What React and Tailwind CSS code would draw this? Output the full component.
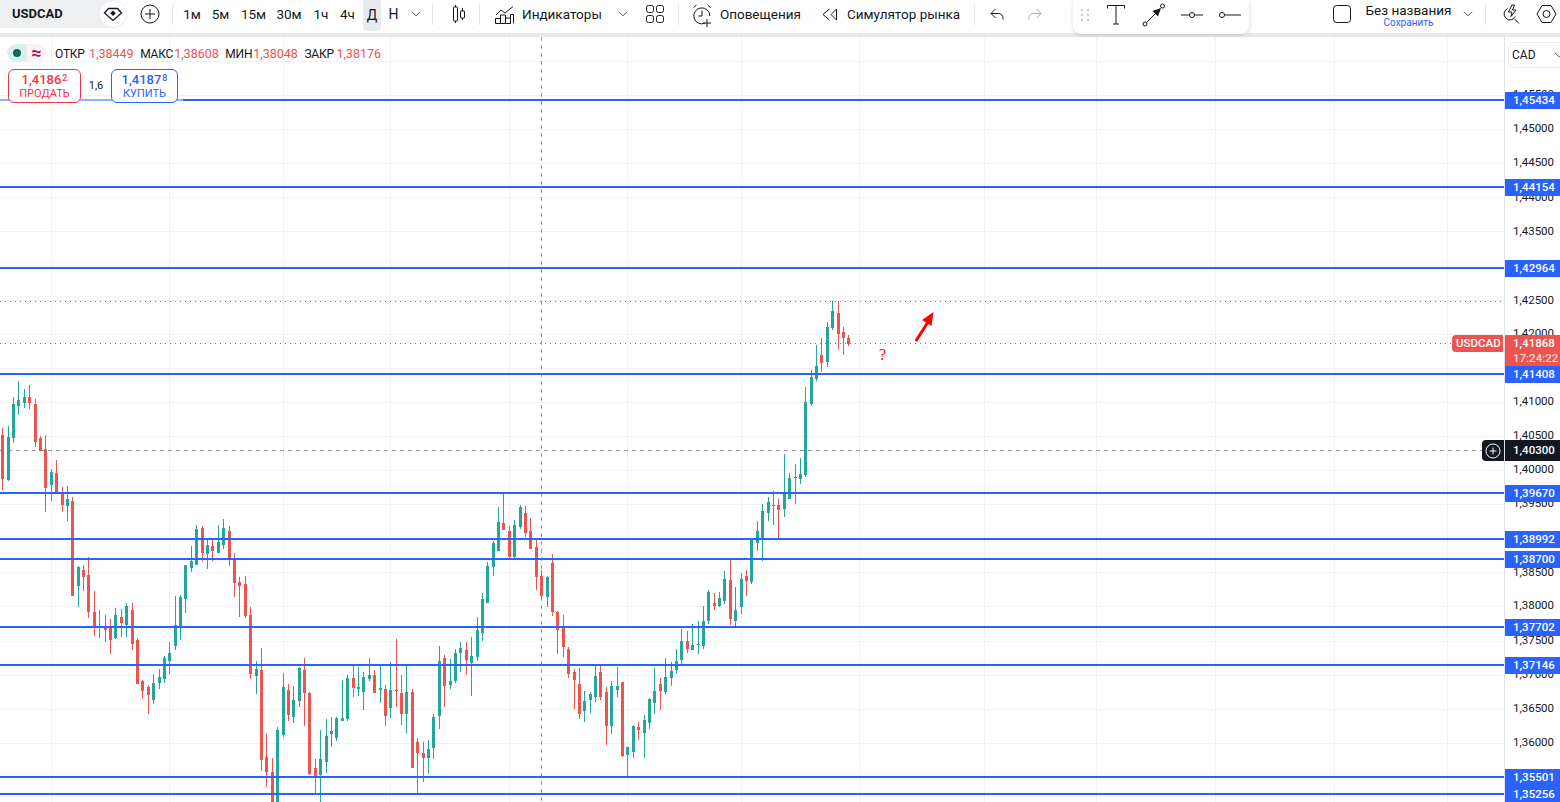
import React from 'react';

const FONT = "font-['Roboto',sans-serif]";

// x, wickTop, wickBottom, bodyTop, bodyBottom, color
const CANDLES = [
  [2, 428, 490, 435, 479, 'r'], [8, 426, 481, 437, 480, 'g'], [13, 397, 443, 404, 438, 'g'], [18, 381, 415, 400, 406, 'g'],
  [24, 389, 408, 397, 403, 'g'], [29, 385, 409, 397, 403, 'r'], [35, 399, 447, 404, 442, 'r'], [40, 436, 451, 438, 451, 'r'],
  [45, 435, 512, 449, 488, 'r'], [51, 469, 501, 472, 485, 'g'], [56, 460, 493, 473, 493, 'r'], [62, 487, 512, 492, 505, 'r'],
  [67, 486, 521, 499, 506, 'g'], [72, 497, 596, 501, 596, 'r'], [78, 566, 607, 567, 586, 'g'], [83, 565, 591, 570, 577, 'r'],
  [88, 557, 618, 575, 612, 'r'], [94, 591, 636, 612, 628, 'r'], [99, 610, 638, 626, 628, 'r'], [105, 615, 642, 627, 630, 'r'],
  [110, 619, 654, 626, 640, 'r'], [115, 608, 639, 615, 638, 'g'], [121, 609, 637, 617, 623, 'r'], [126, 603, 637, 606, 625, 'g'],
  [132, 603, 650, 610, 644, 'r'], [137, 638, 684, 640, 684, 'r'], [142, 680, 699, 681, 691, 'r'], [148, 685, 714, 687, 695, 'r'],
  [153, 674, 704, 683, 700, 'g'], [159, 669, 689, 677, 683, 'g'], [164, 656, 683, 658, 679, 'g'], [169, 642, 674, 653, 661, 'g'],
  [175, 596, 650, 625, 646, 'g'], [180, 595, 640, 597, 627, 'g'], [185, 565, 613, 565, 599, 'g'], [191, 546, 572, 561, 568, 'g'],
  [196, 525, 565, 529, 565, 'g'], [202, 526, 561, 528, 553, 'r'], [207, 539, 569, 545, 554, 'g'], [212, 540, 561, 546, 551, 'r'],
  [218, 525, 553, 542, 553, 'g'], [223, 519, 549, 528, 545, 'g'], [229, 526, 566, 531, 560, 'r'], [234, 553, 597, 559, 583, 'r'],
  [239, 577, 617, 582, 586, 'r'], [245, 576, 618, 584, 616, 'r'], [250, 607, 679, 615, 674, 'r'], [256, 661, 694, 669, 676, 'g'],
  [261, 648, 771, 670, 760, 'r'], [266, 733, 787, 757, 772, 'r'], [272, 758, 802, 772, 802, 'r'], [277, 727, 802, 730, 802, 'g'],
  [283, 673, 737, 687, 735, 'g'], [288, 684, 721, 690, 715, 'r'], [293, 686, 723, 700, 717, 'g'], [299, 667, 707, 668, 701, 'g'],
  [304, 658, 726, 670, 693, 'r'], [309, 692, 775, 693, 774, 'r'], [315, 759, 795, 768, 776, 'r'], [320, 730, 802, 759, 775, 'g'],
  [326, 719, 773, 736, 762, 'g'], [331, 717, 747, 731, 734, 'g'], [336, 717, 741, 718, 738, 'g'], [342, 680, 721, 718, 721, 'g'],
  [347, 675, 721, 678, 719, 'g'], [353, 665, 697, 678, 688, 'r'], [358, 667, 696, 687, 689, 'g'], [363, 672, 710, 677, 692, 'g'],
  [369, 658, 681, 675, 679, 'g'], [374, 670, 693, 675, 693, 'r'], [380, 666, 703, 688, 690, 'g'], [385, 685, 726, 689, 716, 'r'],
  [390, 662, 718, 690, 708, 'g'], [396, 639, 707, 690, 691, 'r'], [401, 675, 725, 693, 714, 'r'], [406, 664, 733, 692, 714, 'g'],
  [412, 689, 768, 692, 768, 'r'], [417, 738, 794, 742, 753, 'r'], [423, 742, 782, 753, 758, 'r'], [428, 740, 774, 749, 758, 'g'],
  [433, 714, 759, 717, 748, 'g'], [439, 646, 729, 661, 716, 'g'], [444, 655, 707, 658, 686, 'r'], [450, 659, 689, 681, 685, 'g'],
  [455, 649, 683, 653, 681, 'g'], [460, 642, 672, 648, 653, 'g'], [466, 642, 675, 650, 660, 'r'], [471, 637, 696, 656, 663, 'g'],
  [477, 617, 661, 630, 657, 'g'], [482, 593, 641, 599, 633, 'g'], [487, 562, 603, 566, 603, 'g'], [493, 541, 576, 543, 567, 'g'],
  [498, 507, 551, 522, 551, 'g'], [503, 493, 530, 523, 530, 'r'], [509, 526, 558, 531, 557, 'r'], [514, 520, 560, 525, 557, 'g'],
  [520, 505, 529, 507, 527, 'g'], [525, 506, 537, 513, 533, 'r'], [530, 518, 549, 531, 549, 'r'], [536, 538, 590, 547, 577, 'r'],
  [541, 570, 600, 576, 596, 'r'], [547, 576, 607, 577, 597, 'g'], [552, 554, 616, 563, 612, 'r'], [557, 611, 654, 612, 630, 'r'],
  [563, 615, 657, 628, 647, 'r'], [568, 647, 678, 649, 674, 'r'], [574, 669, 709, 672, 680, 'r'], [579, 668, 719, 684, 714, 'r'],
  [584, 691, 722, 701, 711, 'g'], [590, 692, 713, 694, 700, 'g'], [595, 665, 702, 676, 697, 'g'], [600, 665, 700, 672, 697, 'r'],
  [606, 687, 745, 692, 726, 'r'], [611, 681, 734, 686, 726, 'g'], [617, 667, 697, 686, 690, 'g'], [622, 682, 757, 682, 756, 'r'],
  [627, 747, 777, 747, 755, 'g'], [633, 725, 758, 726, 752, 'g'], [638, 722, 740, 727, 730, 'r'], [644, 715, 758, 720, 733, 'g'],
  [649, 698, 729, 699, 723, 'g'], [654, 668, 714, 691, 703, 'g'], [660, 678, 710, 684, 691, 'r'], [665, 658, 694, 677, 692, 'g'],
  [671, 662, 686, 671, 678, 'g'], [676, 649, 674, 661, 670, 'g'], [681, 629, 664, 641, 660, 'g'], [687, 631, 653, 641, 649, 'r'],
  [692, 624, 650, 645, 650, 'g'], [698, 621, 654, 644, 645, 'g'], [703, 606, 649, 621, 646, 'g'], [708, 590, 624, 592, 621, 'g'],
  [714, 593, 610, 603, 606, 'r'], [719, 592, 607, 598, 606, 'g'], [724, 571, 604, 579, 601, 'g'], [730, 559, 625, 580, 619, 'r'],
  [735, 587, 627, 610, 621, 'g'], [741, 573, 614, 579, 607, 'g'], [746, 570, 596, 576, 581, 'r'], [751, 539, 584, 540, 582, 'g'],
  [757, 521, 551, 531, 543, 'g'], [762, 504, 561, 511, 539, 'g'], [768, 497, 521, 502, 513, 'g'], [773, 491, 525, 505, 506, 'g'],
  [778, 499, 539, 505, 510, 'r'], [784, 454, 517, 492, 509, 'g'], [789, 473, 499, 478, 499, 'g'], [795, 464, 504, 477, 478, 'g'],
  [800, 458, 484, 474, 479, 'g'], [805, 387, 477, 402, 475, 'g'], [811, 370, 406, 377, 404, 'g'], [816, 345, 381, 366, 379, 'g'],
  [821, 338, 372, 355, 363, 'r'], [827, 322, 367, 327, 362, 'g'], [832, 301, 330, 311, 328, 'g'], [838, 301, 349, 313, 334, 'r'],
  [843, 327, 355, 332, 338, 'r'], [848, 335, 346, 338, 344, 'r'],
];

const V_GRID = [51, 169, 283, 390, 509, 627, 741, 859, 984, 1096, 1215, 1334, 1447];
const H_GRID = [61, 95, 129, 163, 197, 231, 265, 300, 334, 368, 402, 436, 470, 504, 538, 572, 606, 641, 675, 709, 743, 777];

const LEVELS = [
  [100, '1,45434'], [187, '1,44154'], [268, '1,42964'], [374, '1,41408'], [493, '1,39670'], [539, '1,38992'],
  [559, '1,38700'], [627, '1,37702'], [665, '1,37146'], [777, '1,35501'], [794, '1,35256'],
];

const TICKS = [
  [94, '1,45500'], [128, '1,45000'], [162, '1,44500'], [197, '1,44000'], [231, '1,43500'], [300, '1,42500'], [333, '1,42000'],
  [401, '1,41000'], [435, '1,40500'], [469, '1,40000'], [503, '1,39500'], [572, '1,38500'], [605, '1,38000'], [640, '1,37500'],
  [674, '1,37000'], [708, '1,36500'], [742, '1,36000'],
];

const TIMES = [
  ['1м', 'w-[38px]'], ['5м', 'w-[19px]'], ['15м', 'w-[47px]'], ['30м', 'w-[24px]'], ['1ч', 'w-[40px]'], ['4ч', 'w-[13px]'],
];

const Sep = ({ className = '' }) => <div className={`w-px h-[22px] mt-[3px] bg-[#e4e5e8] shrink-0 ${className}`} />;

const Chevron = ({ className = '' }) => (
  <svg width="10" height="6" viewBox="0 0 10 6" fill="none" stroke="#4a4d57" strokeWidth="1" className={className}>
    <path d="M1 .8 5 4.8 9 .8" />
  </svg>
);

function Icon({ w, h, children, className = '' }) {
  return (
    <svg width={w} height={h} viewBox={`0 0 ${w} ${h}`} fill="none" stroke="#131722" strokeWidth="1" className={`shrink-0 ${className}`}>
      {children}
    </svg>
  );
}

function Header() {
  return (
    <div className="relative flex items-start h-[33px] bg-white text-[#131722] text-[13.5px]">
      {/* symbol */}
      <div className="flex items-center justify-between w-[127px] h-[28px] pl-3 pr-px rounded-r-full bg-[#eeeff1] shrink-0">
        <span className="font-bold text-[13px]">USDCAD</span>
        <div className="flex items-center justify-center w-[26px] h-[26px] rounded-full bg-white">
          <Icon w={20} h={15}>
            <path d="M5.500 1.500h9L18.500 6 10 13.500 1.500 6z" strokeWidth="1.300" />
            <path d="M10 3.500 12.800 6.300 10 9 7.200 6.300z" fill="#131722" stroke="none" />
          </Icon>
        </div>
      </div>
      <div className="flex items-center justify-center w-[45px] h-[28px] shrink-0">
        <Icon w={20} h={20}>
          <circle cx="10" cy="10" r="9" />
          <path d="M10 5v10M5 10h10" />
        </Icon>
      </div>
      <Sep />
      {/* timeframes */}
      {TIMES.map(([label, width]) => (
        <div key={label} className={`flex items-center justify-center h-[28px] shrink-0 ${width}`}>{label}</div>
      ))}
      <div className="flex items-center justify-center w-[18px] h-[31px] ml-[9px] rounded-b bg-[#e9eaec] shrink-0 text-[14px]">Д</div>
      <div className="flex items-center justify-center w-[25px] h-[28px] shrink-0 text-[14px]">Н</div>
      <div className="flex items-center justify-center w-[20px] h-[28px] shrink-0"><Chevron /></div>
      <Sep className="ml-[6px]" />
      {/* candle type */}
      <div className="flex items-center justify-center w-[46px] h-[28px] pl-[5px] shrink-0">
        <Icon w={14} h={20}>
          <path d="M3.500 1v2M3.500 17v2M10.500 4v3M10.500 14v2" />
          <rect x="1.500" y="3" width="4" height="14" rx=".5" />
          <rect x="8.500" y="7" width="4" height="7" rx=".5" />
        </Icon>
      </div>
      <Sep />
      {/* indicators */}
      <div className="flex items-center h-[28px] ml-[15px] gap-2 shrink-0">
        <Icon w={19} h={20}>
          <path d="M1 11 6 6l4 3 8-6.500" />
          <path d="M.5 19.500v-5h5v5zM5.500 19.500V11h5v8.500zM10.500 19.500V14h5v5.500zM15.500 19.500v-9h3v9" />
        </Icon>
        <span>Индикаторы</span>
      </div>
      <div className="flex items-center justify-center w-[42px] h-[28px] shrink-0"><Chevron /></div>
      <div className="flex items-center justify-center w-[22px] h-[28px] shrink-0">
        <Icon w={18} h={18}>
          <rect x=".5" y=".5" width="7" height="7" rx="2" />
          <rect x="10.500" y=".5" width="7" height="7" rx="2" />
          <rect x=".5" y="10.500" width="7" height="7" rx="2" />
          <rect x="10.500" y="10.500" width="7" height="7" rx="2" />
        </Icon>
      </div>
      <Sep className="ml-[12px]" />
      {/* alerts */}
      <div className="flex items-center h-[28px] ml-[13px] gap-[8px] shrink-0">
        <Icon w={20} h={24} className="mt-[3px]">
          <path d="M13 19.200A8 8 0 1 1 17.800 12" />
          <path d="M10 6.500V12H6.500M1.500 3.500 4.500 1M18.500 3.500 15.500 1M15 15v8M11 19h8" />
        </Icon>
        <span>Оповещения</span>
      </div>
      {/* replay */}
      <div className="flex items-center h-[28px] ml-[21px] gap-[9px] shrink-0">
        <Icon w={16} h={13}>
          <path d="M7.500 1 1 6.500l6.500 5.500M14.500 1 9 6.500l5.500 5.500z" />
        </Icon>
        <span>Симулятор рынка</span>
      </div>
      <Sep className="ml-[14px]" />
      <div className="flex items-center justify-center w-[44px] h-[28px] shrink-0">
        <Icon w={14} h={12}>
          <path d="M5.500 1 1 5.500 5.500 10M1 5.500h7.500a4.500 4.500 0 0 1 4.500 4.500v1.500" />
        </Icon>
      </div>
      <div className="flex items-center justify-center w-[32px] h-[28px] shrink-0">
        <svg width="14" height="12" viewBox="0 0 14 12" fill="none" stroke="#a9abb3" strokeWidth="1">
          <path d="M8.500 1 13 5.500 8.500 10M13 5.500H5.500A4.500 4.500 0 0 0 1 10v1.500" />
        </svg>
      </div>

      {/* right side */}
      <div className="flex items-start ml-auto shrink-0">
        <div className="flex items-center justify-center w-[18px] h-[28px]">
          <Icon w={18} h={18}><rect x=".5" y=".5" width="17" height="17" rx="3" /></Icon>
        </div>
        <div className="flex flex-col items-center w-[85px] ml-[15px] leading-none">
          <span className="text-[13.5px] mt-[2px] leading-[16px] whitespace-nowrap">Без названия</span>
          <span className="text-[10px] text-[#2962ff] leading-[11px] mt-[-1px]">Сохранить</span>
        </div>
        <div className="flex items-center justify-center w-[34px] h-[28px]"><Chevron /></div>
        <Sep />
        <div className="flex items-center justify-center w-[47px] h-[28px] pl-[2px]">
          <Icon w={19} h={20}>
            <path d="M6.500 4.500a6 6 0 1 0 8 8M13.500 15l4.500 4.500" />
            <path d="M11 1 7.500 8h3.500l-1 4.500L15 6h-3.500L13.500 1z" />
          </Icon>
        </div>
        <div className="flex items-center justify-center w-[27px] h-[28px]">
          <Icon w={21} h={20}>
            <path d="M6 1.500h9l5 8.500-5 8.500H6L1 10z" />
            <circle cx="10.500" cy="10" r="3.500" />
          </Icon>
        </div>
      </div>

      {/* floating drawing toolbar */}
      <div className="absolute left-[1073px] top-0 flex items-center w-[176px] h-[34px] pb-[4px] rounded-b-lg bg-white shadow-[0_1px_4px_rgba(0,0,0,0.16)]">
        <div className="grid grid-cols-2 gap-x-[4px] gap-y-[3px] ml-[8px] mr-[18px]">
          {[0, 1, 2, 3, 4, 5].map((i) => <div key={i} className="w-[2px] h-[2px] bg-[#c8cad0]" />)}
        </div>
        <Icon w={18} h={20}>
          <path d="M.5 3.500V.5h17v3M9 .5v18.500M6 19h6" />
        </Icon>
        <Icon w={24} h={24} className="ml-[17px]">
          <circle cx="3" cy="21" r="2" />
          <circle cx="20.500" cy="3" r="2" />
          <path d="M4.500 19.500 14 10" />
          <path d="M19 5 10.500 8 16 13.500z" fill="#131722" stroke="none" />
        </Icon>
        <Icon w={22} h={8} className="ml-[15px]">
          <path d="M0 4h8M14 4h8" />
          <circle cx="11" cy="4" r="2.500" />
        </Icon>
        <Icon w={22} h={8} className="ml-[16px]">
          <circle cx="3" cy="4" r="2.500" />
          <path d="M6 4h16" />
        </Icon>
      </div>
    </div>
  );
}

function ChartCanvas() {
  return (
    <svg width="1504" height="765" viewBox="0 37 1504 765" className="block">
      {V_GRID.map((x) => <rect key={x} x={x} y={37} width={1} height={765} fill="#f0f1f4" />)}
      {H_GRID.map((y) => <rect key={y} x={0} y={y} width={1504} height={1} fill="#f0f1f4" />)}

      {/* crosshair */}
      <line x1="541.500" y1="37" x2="541.500" y2="802" stroke="#9598a1" strokeDasharray="4 4" />
      <line x1="0" y1="450.500" x2="1482" y2="450.500" stroke="#9598a1" strokeDasharray="4 4" />

      {/* dotted high and last price */}
      <line x1="0" y1="301.500" x2="1503" y2="301.500" stroke="#787b86" strokeDasharray="1 4" />
      <line x1="0" y1="343.500" x2="1452" y2="343.500" stroke="#c95a58" strokeDasharray="1 4" />

      {CANDLES.map(([x, wt, wb, bt, bb, c]) => {
        const color = c === 'g' ? '#26a69a' : '#ef5350';
        return (
          <g key={x} fill={color}>
            <rect x={x} y={wt} width={1} height={wb - wt} />
            <rect x={x - 1} y={bt} width={3} height={Math.max(bb - bt, 1)} />
          </g>
        );
      })}

      {LEVELS.map(([y]) => <rect key={y} x={0} y={y - 1} width={1504} height={2} fill="#2962ff" />)}
      <rect x={0} y={99} width={183} height={2} fill="#93afff" />

      {/* red arrow drawn on chart */}
      <path d="M916.500 340 L928 322" stroke="#ff0000" strokeWidth="3" strokeLinecap="round" />
      <path d="M933.500 312 L931.500 326 L922 320z" fill="#ff0000" />
    </svg>
  );
}

function Legend() {
  const rows = [
    ['ОТКР', '1,38449', 'w-[32px]', 'gap-[2px]'],
    ['МАКС', '1,38608', 'w-[32px]', 'gap-[2px]'],
    ['МИН', '1,38048', 'w-[26px]', 'gap-[2px]'],
    ['ЗАКР', '1,38176', 'w-[29px]', 'gap-[3px]'],
  ];
  return (
    <div className="absolute left-[7px] top-[7px] flex items-center h-[18px] leading-none">
      <div className="flex items-center justify-center w-[20px] h-[18px] rounded-l-full bg-[#d9f0ec]">
        <div className="w-[8px] h-[8px] rounded-full bg-[#0b6b5c]" />
      </div>
      <div className="flex items-center justify-center w-[19px] h-[18px] rounded-r-full bg-[#fdf0f6] text-[#a3195b] text-[18px] font-bold">≈</div>
      <div className="flex ml-[9px] mt-[2px] gap-[6.500px]">
        {rows.map(([k, v, w, g]) => (
          <div key={k} className={`flex whitespace-nowrap ${g}`}>
            <span className={`text-[12px] tracking-[-0.2px] text-[#131722] ${w}`}>{k}</span>
            <span className="text-[12.500px] text-[#ef5350]">{v}</span>
          </div>
        ))}
      </div>
    </div>
  );
}

function TradeButtons() {
  return (
    <div className="absolute left-[8px] top-[32px] flex items-start">
      <div className="flex flex-col items-center justify-center w-[73px] h-[34px] rounded-md border border-[#f23645] bg-white text-[#f23645]">
        <div className="text-[13px] font-medium leading-[15px]">1,4186<span className="text-[9px] align-[3px] ml-px">2</span></div>
        <div className="text-[11px] leading-[14px]">ПРОДАТЬ</div>
      </div>
      <div className="flex items-center justify-center w-[30px] h-[34px] text-[11px] text-[#131722]">1,6</div>
      <div className="flex flex-col items-center justify-center w-[67px] h-[34px] rounded-md border border-[#2962ff] bg-white text-[#2962ff]">
        <div className="text-[13px] font-medium leading-[15px]">1,4187<span className="text-[9px] align-[3px] ml-px">8</span></div>
        <div className="text-[11px] leading-[14px]">КУПИТЬ</div>
      </div>
    </div>
  );
}

function PriceAxis() {
  return (
    <div className="relative flex-1 border-l border-[#e0e3eb] bg-white text-[11.500px] text-[#131722] overflow-hidden">
      <div className="absolute left-[3px] top-[5px] flex items-center w-[60px] h-[26px] pl-[3px] rounded-l-md border border-[#eceef2] text-[12px]">
        <span>CAD</span>
        <Chevron className="ml-[18px]" />
      </div>
      {TICKS.map(([y, label]) => (
        <div key={label} className="absolute left-[8px] h-[16px] leading-[16px]" style={{ top: y - 37 - 8 }}>{label}</div>
      ))}
      {LEVELS.map(([y, label]) => (
        <div key={label} className="absolute left-0 right-0 h-[17px] pl-[8px] leading-[17px] bg-[#2962ff] text-white font-medium" style={{ top: y - 37 - 8 }}>
          {label}
        </div>
      ))}
      <div className="absolute left-0 right-0 top-[298px] h-[31px] pl-[8px] pt-px bg-[#ef5350] text-white leading-[15px] font-medium">
        <div>1,41868</div>
        <div className="text-[#fbd5d4]">17:24:22</div>
      </div>
      <div className="absolute left-0 right-0 top-[403px] h-[21px] pl-[8px] leading-[21px] bg-[#131722] text-white font-medium">1,40300</div>
    </div>
  );
}

export default function App() {
  return (
    <div className={`w-[1560px] h-[802px] overflow-hidden bg-white ${FONT}`}>
      <Header />
      <div className="h-[4px] bg-[#e9e9e9]" />
      <div className="flex h-[765px]">
        <div className="relative w-[1504px] shrink-0">
          <ChartCanvas />
          <Legend />
          <TradeButtons />
          <div className="absolute left-[879px] top-[310px] font-['Liberation_Serif',serif] text-[16px] leading-[16px] text-[#ff0000]">?</div>
          <div className="absolute left-[1452px] top-[298px] h-[17px] pl-[4px] w-[51px] rounded-l-sm bg-[#ef5350] text-white text-[11.500px] leading-[17px] font-medium">USDCAD</div>
          <div className="absolute left-[1482px] top-[403px] flex items-center justify-center w-[22px] h-[21px] rounded-l-sm bg-[#131722]">
            <svg width="16" height="16" viewBox="0 0 16 16" fill="none" stroke="#ffffff" strokeWidth="1">
              <circle cx="8" cy="8" r="7" />
              <path d="M8 4.500v7M4.500 8h7" />
            </svg>
          </div>
        </div>
        <PriceAxis />
      </div>
    </div>
  );
}
